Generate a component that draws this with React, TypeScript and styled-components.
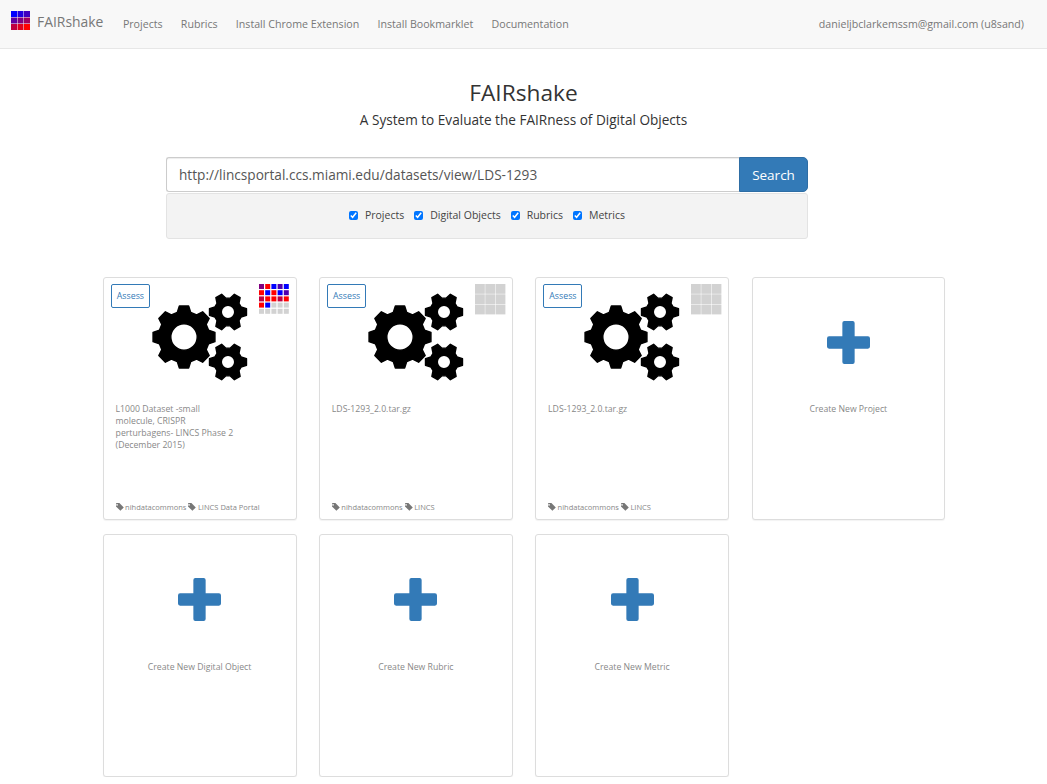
import styled, { createGlobalStyle } from 'styled-components';

const GlobalStyle = createGlobalStyle`
  html, body {
    margin: 0;
    padding: 0;
    background: #fff;
    font-family: 'Open Sans', sans-serif;
    color: #333;
    overflow: hidden;
  }
`;

const Navbar = styled.nav`
  display: flex;
  align-items: center;
  box-sizing: content-box;
  height: 47px;
  padding: 0 23px 1px 11px;
  background: #f8f8f8;
  border-bottom: 1px solid #e7e7e7;
`;

const Brand = styled.a`
  display: flex;
  align-items: center;
  gap: 7px;
  margin-right: 19.5px;
  font-size: 13.9px;
  color: #777;
  position: relative;
  top: -2.5px;
`;

const LogoMark = styled.span`
  display: flex;
  margin-bottom: 2px;
`;

const NavLinks = styled.div`
  display: flex;
  gap: 18.2px;
  flex: 1;
`;

const NavLink = styled.a`
  font-size: 10.65px;
  color: #777;
`;

const Hero = styled.header`
  padding-top: 29px;
  text-align: center;
`;

const Title = styled.h1`
  margin: 0;
  font-size: 22.7px;
  line-height: 30px;
  font-weight: 400;
  color: #333;
`;

const Subtitle = styled.p`
  margin: 2px 0 0;
  font-size: 13.6px;
  line-height: 20px;
  color: #333;
`;

const SearchArea = styled.section`
  width: 642px;
  margin: 27px 0 0 166px;
`;

const SearchGroup = styled.div`
  display: flex;
  height: 35px;
`;

const SearchInput = styled.input`
  flex: 1;
  min-width: 0;
  box-sizing: border-box;
  padding: 0 12px;
  border: 1px solid #ccc;
  border-right: 0;
  border-radius: 3px 0 0 3px;
  font-family: inherit;
  font-size: 13.65px;
  color: #555;
  box-shadow: inset 0 1px 1px rgba(0, 0, 0, 0.075);
`;

const SearchButton = styled.button`
  width: 69px;
  border: 1px solid #2e6da4;
  border-radius: 0 5px 5px 0;
  background: #337ab7;
  color: #fff;
  font-family: inherit;
  font-size: 13.5px;
`;

const Filters = styled.div`
  display: flex;
  justify-content: center;
  align-items: center;
  gap: 10px;
  box-sizing: border-box;
  height: 46px;
  margin-top: 1px;
  padding-bottom: 2px;
  background: #f3f3f3;
  border: 1px solid #e3e3e3;
  border-radius: 3px;
`;

const FilterLabel = styled.label`
  display: flex;
  align-items: center;
  gap: 7px;
  font-size: 10.5px;
  color: #444;
`;

const FilterBox = styled.input`
  width: 9px;
  height: 9px;
  margin: 0;
`;

const CardGrid = styled.main`
  display: grid;
  grid-template-columns: repeat(4, 193.75px);
  grid-auto-rows: 243px;
  column-gap: 22.5px;
  row-gap: 14.2px;
  margin: 38.1px 0 0 102.9px;
`;

const Card = styled.article`
  position: relative;
  display: flex;
  flex-direction: column;
  box-sizing: border-box;
  padding: 15px 12px 7px 11.7px;
  border: 1px solid #ddd;
  border-radius: 3px;
  background: #fff;
  box-shadow: 0 1px 1px rgba(0, 0, 0, 0.05);
`;

const AssessButton = styled.a`
  position: absolute;
  top: 6px;
  left: 7px;
  box-sizing: border-box;
  width: 39px;
  height: 24px;
  border: 1px solid #337ab7;
  border-radius: 2px;
  font-size: 8.8px;
  line-height: 22px;
  text-align: center;
  color: #337ab7;
`;

const InsigniaSlot = styled.div`
  position: absolute;
  top: 6px;
  right: 7px;
  width: 30px;
  height: 31px;
`;

const GearsWrap = styled.div`
  display: flex;
  justify-content: center;
  height: 110.3px;
`;

const PlusWrap = styled.div`
  display: flex;
  justify-content: center;
  height: 110.3px;
  padding-top: 28px;
  box-sizing: border-box;
`;

const Description = styled.p<{ $center?: boolean }>`
  margin: 0;
  max-width: ${p => (p.$center ? 'none' : '120px')};
  font-size: 8.7px;
  line-height: 12px;
  color: #888;
  text-align: ${p => (p.$center ? 'center' : 'left')};
`;

const Tags = styled.div`
  display: flex;
  align-items: center;
  gap: 2px;
  margin-top: auto;
  font-size: 7.5px;
  color: #888;
`;

const Tag = styled.span`
  display: inline-flex;
  align-items: center;
  gap: 1.5px;
`;

function gearPath(
  cx: number,
  cy: number,
  outer: number,
  root: number,
  hole: number,
  teeth: number,
  start: number,
  tip: number,
  base: number
) {
  const pts: string[] = [];
  const step = (Math.PI * 2) / teeth;
  const at = (r: number, a: number) => `${(cx + r * Math.cos(a)).toFixed(2)} ${(cy + r * Math.sin(a)).toFixed(2)}`;
  for (let i = 0; i < teeth; i++) {
    const a = start + i * step;
    pts.push(at(root, a - step * base), at(outer, a - step * tip), at(outer, a + step * tip), at(root, a + step * base));
  }
  const ring = `M${pts.join('L')}Z`;
  const circle = `M${cx - hole} ${cy}a${hole} ${hole} 0 1 0 ${hole * 2} 0a${hole} ${hole} 0 1 0 ${-hole * 2} 0Z`;
  return ring + circle;
}

// stroke rounds the tooth corners, so radii are drawn a little short
const gearsD =
  gearPath(32, 44, 31.3, 25.5, 13.2, 8, -Math.PI / 2, 0.19, 0.34) +
  gearPath(76, 19, 18.8, 14, 6.7, 6, 0, 0.17, 0.36) +
  gearPath(76, 69, 18.8, 14, 6.7, 6, 0, 0.17, 0.36);

function Gears() {
  return (
    <svg width="96" height="88" viewBox="0 0 96 88" fill="#000" fillRule="evenodd" stroke="#000" strokeWidth="1.4" strokeLinejoin="round">
      <path d={gearsD} />
    </svg>
  );
}

function Plus() {
  return (
    <svg width="43" height="43" viewBox="1 1 42 42" fill="#337ab7">
      <path d="M16 3a2 2 0 0 1 2-2h8a2 2 0 0 1 2 2v13h13a2 2 0 0 1 2 2v8a2 2 0 0 1-2 2H28v13a2 2 0 0 1-2 2h-8a2 2 0 0 1-2-2V28H3a2 2 0 0 1-2-2v-8a2 2 0 0 1 2-2h13z" />
    </svg>
  );
}

function TagIcon() {
  return (
    <svg width="8" height="8" viewBox="0 0 8 8" fill="#777">
      <path d="M0 0.6V3.4L4.4 7.8 7.8 4.4 3.4 0H0.6ZM1.6 2.4a.8.8 0 1 1 0-1.1.8.8 0 0 1 0 1.1Z" fillRule="evenodd" />
    </svg>
  );
}

const GRAY = '#d2d2d2';

function Tiles({ colors, size, cell, gap }: { colors: string[][]; size: number; cell: number; gap: number }) {
  return (
    <svg width={size} height={size} viewBox={`0 0 ${size} ${size}`}>
      {colors.flatMap((row, y) =>
        row.map((c, x) => (
          <rect key={`${x}-${y}`} x={x * (cell + gap)} y={y * (cell + gap)} width={cell} height={cell} fill={c} />
        ))
      )}
    </svg>
  );
}

const logoColors = [
  ['#0000ff', '#2000df', '#4000bf'],
  ['#60009f', '#800080', '#9f0060'],
  ['#bf0040', '#df0020', '#ff0000']
];

const scoredColors = [
  ['#800080', '#ff0000', '#0000ff', '#5000af', '#0000ff'],
  ['#ff0000', '#0000ff', '#ff0000', '#0000ff', '#5000af'],
  ['#bf0040', '#ff0000', '#ff0000', '#bf0040', '#ff0000'],
  ['#ff0000', '#0000ff', GRAY, GRAY, GRAY],
  [GRAY, GRAY, GRAY, GRAY, GRAY]
];

const emptyColors = [
  [GRAY, GRAY, GRAY],
  [GRAY, GRAY, GRAY],
  [GRAY, GRAY, GRAY]
];

const navItems = ['Projects', 'Rubrics', 'Install Chrome Extension', 'Install Bookmarklet', 'Documentation'];
const filters = ['Projects', 'Digital Objects', 'Rubrics', 'Metrics'];

const objects = [
  {
    text: 'L1000 Dataset -small molecule, CRISPR perturbagens- LINCS Phase 2 (December 2015)',
    tags: ['nihdatacommons', 'LINCS Data Portal'],
    scored: true
  },
  { text: 'LDS-1293_2.0.tar.gz', tags: ['nihdatacommons', 'LINCS'], scored: false },
  { text: 'LDS-1293_2.0.tar.gz', tags: ['nihdatacommons', 'LINCS'], scored: false }
];

function ObjectCard({ text, tags, scored }: { text: string; tags: string[]; scored: boolean }) {
  return (
    <Card>
      <AssessButton>Assess</AssessButton>
      <InsigniaSlot>
        {scored ? (
          <Tiles colors={scoredColors} size={31} cell={5} gap={1.2} />
        ) : (
          <Tiles colors={emptyColors} size={31} cell={9.8} gap={0.5} />
        )}
      </InsigniaSlot>
      <GearsWrap>
        <Gears />
      </GearsWrap>
      <Description>{text}</Description>
      <Tags>
        {tags.map(t => (
          <Tag key={t}>
            <TagIcon />
            {t}
          </Tag>
        ))}
      </Tags>
    </Card>
  );
}

function CreateCard({ label }: { label: string }) {
  return (
    <Card>
      <PlusWrap>
        <Plus />
      </PlusWrap>
      <Description $center>{label}</Description>
    </Card>
  );
}

export default function App() {
  return (
    <>
      <GlobalStyle />
      <Navbar>
        <Brand>
          <LogoMark>
            <Tiles colors={logoColors} size={19} cell={6} gap={0.5} />
          </LogoMark>
          FAIRshake
        </Brand>
        <NavLinks>
          {navItems.map(n => (
            <NavLink key={n}>{n}</NavLink>
          ))}
        </NavLinks>
        <NavLink>danieljbclarkemssm@gmail.com (u8sand)</NavLink>
      </Navbar>
      <Hero>
        <Title>FAIRshake</Title>
        <Subtitle>A System to Evaluate the FAIRness of Digital Objects</Subtitle>
      </Hero>
      <SearchArea>
        <SearchGroup>
          <SearchInput readOnly value="http://lincsportal.ccs.miami.edu/datasets/view/LDS-1293" />
          <SearchButton>Search</SearchButton>
        </SearchGroup>
        <Filters>
          {filters.map(f => (
            <FilterLabel key={f}>
              <FilterBox type="checkbox" defaultChecked />
              {f}
            </FilterLabel>
          ))}
        </Filters>
      </SearchArea>
      <CardGrid>
        {objects.map((o, i) => (
          <ObjectCard key={i} {...o} />
        ))}
        <CreateCard label="Create New Project" />
        <CreateCard label="Create New Digital Object" />
        <CreateCard label="Create New Rubric" />
        <CreateCard label="Create New Metric" />
      </CardGrid>
    </>
  );
}
